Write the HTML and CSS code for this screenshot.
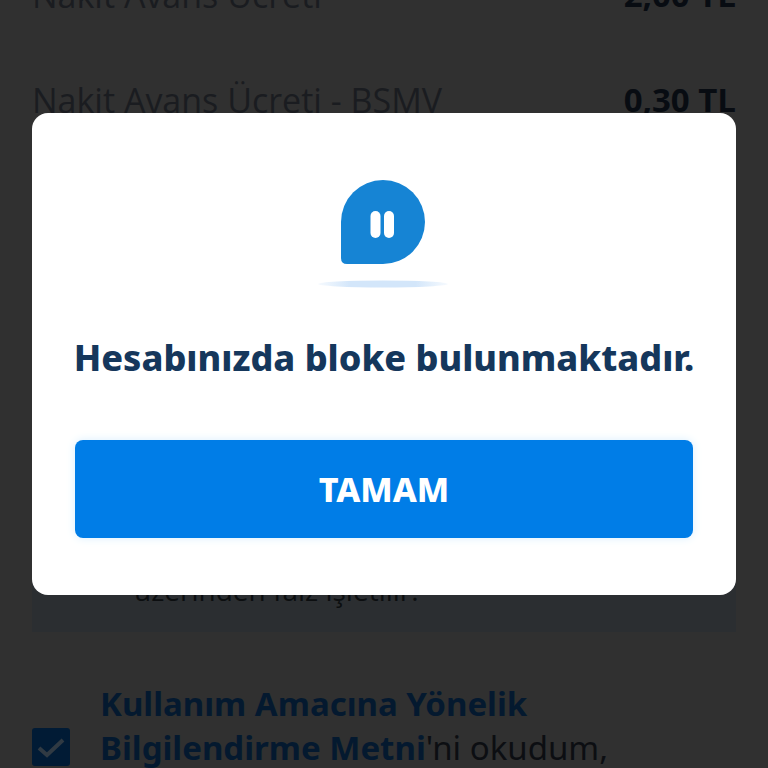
FILE: index.html
```html
<!DOCTYPE html>
<html lang="tr">
<head>
<meta charset="utf-8">
<meta name="viewport" content="width=device-width, initial-scale=1">
<title>Nakit Avans</title>
<link rel="stylesheet" href="styles.css">
</head>
<body>
<main class="page">
  <dl class="fees">
    <div class="fee"><dt>Nakit Avans Ücreti</dt><dd>2,00 TL</dd></div>
    <div class="fee"><dt>Nakit Avans Ücreti - BSMV</dt><dd>0,30 TL</dd></div>
  </dl>
  <p class="notice">üzerinden faiz işletilir.</p>
  <div class="consent">
    <input class="consent-box" type="checkbox" id="consent" checked>
    <svg class="consent-tick" viewBox="0 0 38 38" aria-hidden="true"><path d="M7 20 15 27 31 12"/></svg>
    <label class="consent-text" for="consent"><a href="#metin">Kullanım Amacına Yönelik Bilgilendirme Metni</a>'ni okudum,</label>
  </div>
</main>
<div class="overlay">
  <section class="dialog" role="alertdialog" aria-modal="true" aria-labelledby="dialog-title">
    <svg class="dialog-icon" viewBox="0 0 132 110" aria-hidden="true">
      <defs>
        <linearGradient id="shade">
          <stop offset="0" stop-color="#d3e6fa" stop-opacity="0.2"/>
          <stop offset="0.25" stop-color="#d3e6fa"/>
          <stop offset="0.75" stop-color="#d3e6fa"/>
          <stop offset="1" stop-color="#d3e6fa" stop-opacity="0.2"/>
        </linearGradient>
      </defs>
      <path fill="#1684d4" d="M23 42A42 42 0 1 1 65 84H29Q23 84 23 78Z"/>
      <rect x="52.500" y="31" width="10" height="27" rx="5" fill="#fff"/>
      <rect x="66" y="31" width="10" height="27" rx="5" fill="#fff"/>
      <ellipse cx="65" cy="104" rx="65" ry="3.500" fill="url(#shade)"/>
    </svg>
    <h1 class="dialog-title" id="dialog-title">Hesabınızda bloke bulunmaktadır.</h1>
    <button class="dialog-button" type="button">TAMAM</button>
  </section>
</div>
</body>
</html>
```
FILE: styles.css
```css
* {
  box-sizing: border-box;
}

body {
  margin: 0;
  height: 100vh;
  overflow: hidden;
  background: #303030;
  font: 33px/44px "Noto Sans", "Open Sans", sans-serif;
}

.page {
  display: flow-root;
  padding: 0 32px;
}

/* The list is scrolled partly past the top edge. */
.fees {
  margin: -58px 0 0;
  font-family: "Open Sans", "Noto Sans", sans-serif;
}

.fee {
  display: flex;
  justify-content: space-between;
  align-items: center;
  height: 105px;
}

.fee dt {
  color: #1a1c20;
  font-size: 34px;
}

.fee dd {
  margin: 0;
  color: #080c12;
  font-weight: 700;
}

.notice {
  margin: 300px 0 50px;
  padding: 116px 24px 20px 102px;
  background: #2b2e31;
  color: #0c0e10;
  font-family: "Open Sans", "Noto Sans", sans-serif;
  font-size: 28px;
}

.consent {
  display: grid;
  grid-template-columns: 38px 1fr;
  column-gap: 30px;
}

.consent-box,
.consent-tick {
  grid-area: 1 / 1;
  align-self: end;
  width: 38px;
  height: 38px;
  margin: 0 0 4px;
}

.consent-box {
  appearance: none;
  border-radius: 3px;
  background: #011b35;
}

.consent-tick {
  pointer-events: none;
  fill: none;
  stroke: #303a43;
  stroke-width: 4;
}

.consent-text {
  max-width: 560px;
  color: #0c0e12;
}

.consent-text a {
  color: #04192f;
  font-weight: 700;
  text-decoration: none;
}

.overlay {
  position: fixed;
  inset: 0;
  padding: 113px 32px 0;
}

.dialog {
  display: flex;
  flex-direction: column;
  align-items: center;
  padding: 67px 43px 57px;
  border-radius: 16px;
  background: #fff;
}

.dialog-icon {
  width: 132px;
  height: 110px;
}

.dialog-title {
  margin: 44px 0 58px;
  color: #15375c;
  font-size: 36px;
  line-height: 48px;
  font-weight: 800;
  white-space: nowrap;
}

.dialog-button {
  width: 100%;
  height: 98px;
  border: 0;
  border-radius: 8px;
  background: #007de7;
  box-shadow: 0 0 10px #d9efff;
  color: #fff;
  font: 800 34px/44px "Noto Sans", "Open Sans", sans-serif;
}
```
